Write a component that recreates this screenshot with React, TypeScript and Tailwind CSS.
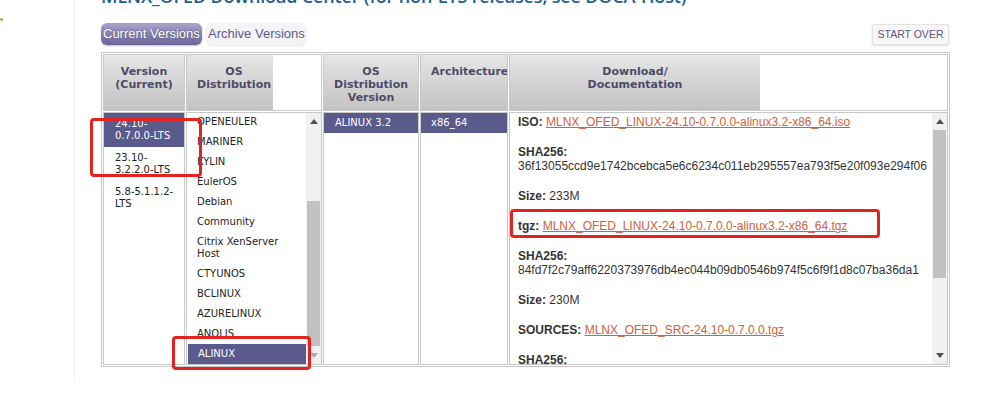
import React from "react";

const versions = [
  { lines: ["24.10-", "0.7.0.0-LTS"], selected: true },
  { lines: ["23.10-", "3.2.2.0-LTS"] },
  { lines: ["5.8-5.1.1.2-", "LTS"] },
];

const distributions = [
  "OPENEULER",
  "MARINER",
  "KYLIN",
  "EulerOS",
  "Debian",
  "Community",
  "Citrix XenServer Host",
  "CTYUNOS",
  "BCLINUX",
  "AZURELINUX",
  "ANOLIS",
  "ALINUX",
];

const downloads = [
  { label: "ISO:", link: "MLNX_OFED_LINUX-24.10-0.7.0.0-alinux3.2-x86_64.iso" },
  { label: "SHA256:", hash: "36f13055ccd9e1742bcebca5e6c6234c011eb295557ea793f5e20f093e294f06" },
  { label: "Size:", text: "233M" },
  { label: "tgz:", link: "MLNX_OFED_LINUX-24.10-0.7.0.0-alinux3.2-x86_64.tgz" },
  { label: "SHA256:", hash: "84fd7f2c79aff6220373976db4ec044b09db0546b974f5c6f9f1d8c07ba36da1" },
  { label: "Size:", text: "230M" },
  { label: "SOURCES:", link: "MLNX_OFED_SRC-24.10-0.7.0.0.tgz" },
  { label: "SHA256:" },
];

const Arrow = ({ up, light }: { up?: boolean; light?: boolean }) => (
  <svg width="8" height="5" viewBox="0 0 8 5">
    <path d={up ? "M0 5 L4 0 L8 5 Z" : "M0 0 L8 0 L4 5 Z"} fill={light ? "#a8a8a8" : "#505050"} />
  </svg>
);

// fake native scrollbar, gaps are fixed per list
const Scrollbar = ({
  before,
  thumb,
  lightDown,
}: {
  before: string;
  thumb: string;
  lightDown?: boolean;
}) => (
  <div className="w-[15px] shrink-0 bg-[#f1f1f1] flex flex-col">
    <div className="h-[17px] flex items-center justify-center shrink-0">
      <Arrow up />
    </div>
    <div className={`${before} shrink-0`} />
    <div className={`${thumb} mx-[1px] bg-[#c1c1c1] shrink-0`} />
    <div className="flex-1" />
    <div className="h-[17px] flex items-center justify-center shrink-0">
      <Arrow light={lightDown} />
    </div>
  </div>
);

const HeaderCell = ({
  lines,
  width,
  gray,
  pad = "px-[10px]",
}: {
  lines: string[];
  width: string;
  gray: string;
  pad?: string;
}) => (
  <div className={`${width} h-[57px] border border-[#c8c8c8] bg-white overflow-hidden shrink-0`}>
    <div
      className={`${gray} h-full bg-linear-to-b from-[#e6e6e6] to-[#c3c3c3] ${pad} pt-[10px] text-center text-[11px] leading-[13px] font-bold text-[#4d4a68] whitespace-nowrap`}
    >
      {lines.map((l, i) => (
        <div key={i}>{l}</div>
      ))}
    </div>
  </div>
);

const RedBox = ({ className }: { className: string }) => (
  <div className={`absolute border-[3px] border-[#e3231f] rounded-[4px] pointer-events-none ${className}`} />
);

export default function App() {
  return (
    <div className="relative w-[995px] h-[393px] overflow-hidden bg-white flex font-['Liberation_Sans',Arial,sans-serif]">
      {/* left rail */}
      <div className="w-[75px] h-[380px] shrink-0 border-r border-[#efefef]">
        <div className="mt-[18px] w-[3px] h-[3px] rounded-full bg-[#9cb83a]" />
      </div>

      <div className="pl-[26px] w-[875px] shrink-0">
        <h1 className="-mt-[16px] text-[18px] leading-[24px] tracking-[-0.15px] font-semibold text-[#1f5d92] whitespace-nowrap font-['Open_Sans',sans-serif]">
          MLNX_OFED Download Center (for non-LTS releases, see DOCA-Host)
        </h1>

        <div className="mt-[15px] flex items-start justify-between w-[849px]">
          <div className="flex gap-[4px]">
            <button className="h-[22px] w-[101px] rounded-[6px] bg-linear-to-b from-[#aaa4cc] to-[#6a6596] text-white text-[13px] leading-[22px] px-[2px] text-left whitespace-nowrap [text-shadow:0_0_2px_#4b4670] shadow-[0_1px_2px_rgba(0,0,0,0.25)]">
              Current Versions
            </button>
            <button className="h-[22px] w-[100px] rounded-[6px] bg-[#f4f4f6] text-[#5d5a88] text-[13px] leading-[22px] px-[2px] text-left whitespace-nowrap shadow-[0_1px_2px_rgba(0,0,0,0.12)]">
              Archive Versions
            </button>
          </div>
          <button className="mt-[1px] mr-[1px] h-[21px] w-[77px] rounded-[2px] bg-[#f7f7f7] border border-[#e2e2e2] shadow-[0_1px_2px_rgba(0,0,0,0.15)] text-[10.5px] text-[#5b5878] leading-[19px]">
            START OVER
          </button>
        </div>

        {/* selection table */}
        <div className="mt-[7px] w-[849px] border border-[#c8c8c8] p-px flex flex-col gap-px font-['DejaVu_Sans',Verdana,sans-serif]">
          <div className="flex gap-px">
            <HeaderCell lines={["Version", "(Current)"]} width="w-[82px]" gray="w-full" />
            <HeaderCell lines={["OS", "Distribution"]} width="w-[136px]" gray="w-[86px]" pad="pl-[10px] pr-[2px]" />
            <HeaderCell lines={["OS", "Distribution", "Version"]} width="w-[96px]" gray="w-full" />
            <HeaderCell lines={["Architecture"]} width="w-[88px]" gray="w-full" />
            <HeaderCell lines={["Download/", "Documentation"]} width="w-[439px]" gray="w-[250px]" />
          </div>

          <div className="flex gap-px h-[253px] text-[10px] text-[#222]">
            {/* versions */}
            <div className="w-[82px] border border-[#c8c8c8] shrink-0">
              {versions.map((v, i) => (
                <div
                  key={i}
                  className={`pl-[11px] py-[5px] leading-[12px] ${v.selected ? "bg-[#5b5a8c] text-white" : ""}`}
                >
                  {v.lines.map((l, j) => (
                    <div key={j}>{l}</div>
                  ))}
                </div>
              ))}
            </div>

            {/* distributions */}
            <div className="w-[136px] border border-[#c8c8c8] shrink-0 flex">
              <div className="flex-1 overflow-hidden">
                <div className="-mt-[1px]">
                  {distributions.map((d) => (
                    <div
                      key={d}
                      className={`pl-[10px] pr-[6px] py-[4px] leading-[12px] ${
                        d === "ALINUX" ? "bg-[#5b5a8c] text-white ml-px" : ""
                      }`}
                    >
                      {d}
                    </div>
                  ))}
                </div>
              </div>
              <Scrollbar before="h-[71px]" thumb="h-[145px]" lightDown />
            </div>

            {/* distribution version */}
            <div className="w-[96px] border border-[#c8c8c8] shrink-0">
              <div className="h-[20px] leading-[20px] pl-[11px] bg-[#5b5a8c] text-white">ALINUX 3.2</div>
            </div>

            {/* architecture */}
            <div className="w-[88px] border border-[#c8c8c8] shrink-0">
              <div className="h-[20px] leading-[20px] pl-[10px] bg-[#5b5a8c] text-white">x86_64</div>
            </div>

            {/* downloads */}
            <div className="w-[439px] border border-[#c8c8c8] shrink-0 flex font-['Liberation_Sans',Arial,sans-serif] text-[12px] leading-[14px] text-[#333]">
              <div className="flex-1 overflow-hidden pl-[8px] pt-[2px] whitespace-nowrap">
                {downloads.map((d, i) => (
                  <div key={i} className="mb-[16px]">
                    <span className="font-bold">{d.label}</span>
                    {d.link && (
                      <>
                        {" "}
                        <a href="#" className="text-[#d2603c] underline">
                          {d.link}
                        </a>
                      </>
                    )}
                    {d.text && <> {d.text}</>}
                    {d.hash && <div>{d.hash}</div>}
                  </div>
                ))}
              </div>
              <Scrollbar before="h-0" thumb="h-[148px]" />
            </div>
          </div>
        </div>
      </div>

      {/* annotation boxes */}
      <RedBox className="left-[90px] top-[118px] w-[112px] h-[59px]" />
      <RedBox className="left-[172px] top-[336px] w-[139px] h-[34px]" />
      <RedBox className="left-[510px] top-[209px] w-[370px] h-[29px]" />
    </div>
  );
}
